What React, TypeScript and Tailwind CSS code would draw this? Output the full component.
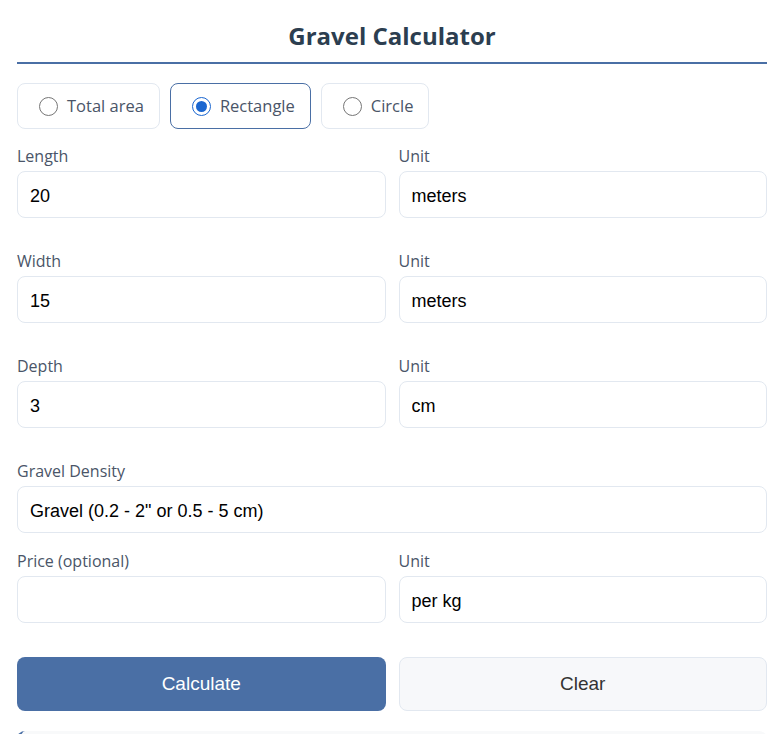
import { useState } from "react"

type Shape = "total" | "rectangle" | "circle"

const SHAPES: { value: Shape; label: string }[] = [
  { value: "total", label: "Total area" },
  { value: "rectangle", label: "Rectangle" },
  { value: "circle", label: "Circle" },
]

const labelCls = "block text-[16px] leading-5 text-[#4a5568] mb-[5px] font-['Open_Sans',sans-serif]"
const fieldCls =
  "w-full h-[47px] px-[12px] pt-[3px] rounded-lg border border-[#e2e8f0] bg-white text-[18px] text-black font-['Liberation_Sans',Arial,sans-serif] outline-none appearance-none"

function Field({ label, value }: { label: string; value: string }) {
  return (
    <div>
      <label className={labelCls}>{label}</label>
      <input className={fieldCls} defaultValue={value} />
    </div>
  )
}

function Row({ left, leftValue, unit, className = "" }: { left: string; leftValue: string; unit: string; className?: string }) {
  return (
    <div className={`grid grid-cols-2 gap-[13px] ${className}`}>
      <Field label={left} value={leftValue} />
      <Field label="Unit" value={unit} />
    </div>
  )
}

export default function App() {
  const [shape, setShape] = useState<Shape>("rectangle")

  return (
    <div className="min-h-screen bg-white pl-[17px] pr-[5px] font-['Open_Sans',sans-serif]">
      {/* Header */}
      <h1 className="pt-[20px] pb-[10px] text-center text-[24px] leading-8 font-bold text-[#2c3e50] border-b-2 border-[#4a6fa5]">
        Gravel Calculator
      </h1>

      {/* Shape selection */}
      <div className="flex gap-[10px] mt-[19px]">
        {SHAPES.map((s) => {
          const active = shape === s.value
          return (
            <button
              key={s.value}
              type="button"
              onClick={() => setShape(s.value)}
              className={`flex items-center gap-[9px] h-[46px] pl-[21px] pr-[15px] pt-[1px] rounded-lg border bg-white ${
                active ? "border-[#4a6fa5]" : "border-[#e2e8f0]"
              }`}
            >
              <span
                className={`flex items-center justify-center w-[19px] h-[19px] rounded-full border-[1.5px] ${
                  active ? "border-[#1a66d0]" : "border-[#767676]"
                }`}
              >
                {active && <span className="w-[11px] h-[11px] rounded-full bg-[#1a66d0]" />}
              </span>
              <span className="text-[16.5px] text-[#4a5568]">{s.label}</span>
            </button>
          )
        })}
      </div>

      <div className="mt-[17px]">
        <Row left="Length" leftValue="20" unit="meters" className="mb-[33px]" />
        <Row left="Width" leftValue="15" unit="meters" className="mb-[33px]" />
        <Row left="Depth" leftValue="3" unit="cm" className="mb-[33px]" />

        <div className="mb-[18px]">
          <label className={labelCls}>Gravel Density</label>
          <input className={`${fieldCls} h-[46px]`} defaultValue={'Gravel (0.2 - 2" or 0.5 - 5 cm)'} />
        </div>

        <Row left="Price (optional)" leftValue="" unit="per kg" />
      </div>

      {/* Actions */}
      <div className="grid grid-cols-2 gap-[13px] mt-[34px]">
        <button className="h-[54px] rounded-lg bg-[#4a6fa5] text-white text-[19px] font-['Liberation_Sans',Arial,sans-serif]">
          Calculate
        </button>
        <button className="h-[54px] rounded-lg bg-[#f7f8fa] border border-[#e2e8f0] text-[#333] text-[19px] font-['Liberation_Sans',Arial,sans-serif]">
          Clear
        </button>
      </div>

      {/* Result */}
      <div className="mt-[20px] h-[120px] rounded-lg bg-[#f8f9fa] border-l-4 border-[#4a6fa5]" />
    </div>
  )
}
